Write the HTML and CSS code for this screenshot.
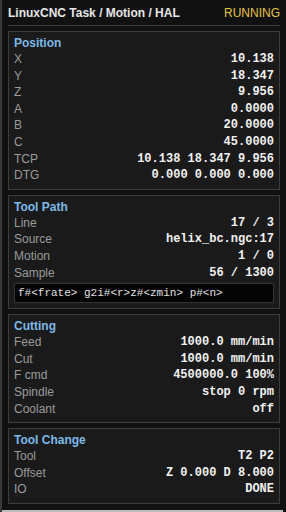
FILE: index.html
```html
<!DOCTYPE html>
<html>
<head>
<meta charset="utf-8">
<link rel="stylesheet" href="styles.css">
</head>
<body>
<div class="app">
  <div class="header">
    <span class="htitle">LinuxCNC Task / Motion / HAL</span>
    <span class="status">RUNNING</span>
  </div>

  <section class="panel">
    <div class="ptitle">Position</div>
    <div class="row"><span class="lbl">X</span><span class="val">10.138</span></div>
    <div class="row"><span class="lbl">Y</span><span class="val">18.347</span></div>
    <div class="row"><span class="lbl">Z</span><span class="val">9.956</span></div>
    <div class="row"><span class="lbl">A</span><span class="val">0.0000</span></div>
    <div class="row"><span class="lbl">B</span><span class="val">20.0000</span></div>
    <div class="row"><span class="lbl">C</span><span class="val">45.0000</span></div>
    <div class="row"><span class="lbl">TCP</span><span class="val">10.138 18.347 9.956</span></div>
    <div class="row"><span class="lbl">DTG</span><span class="val">0.000 0.000 0.000</span></div>
  </section>

  <section class="panel">
    <div class="ptitle">Tool Path</div>
    <div class="row"><span class="lbl">Line</span><span class="val">17 / 3</span></div>
    <div class="row"><span class="lbl">Source</span><span class="val">helix_bc.ngc:17</span></div>
    <div class="row"><span class="lbl">Motion</span><span class="val">1 / 0</span></div>
    <div class="row"><span class="lbl">Sample</span><span class="val">56 / 1300</span></div>
    <div class="code">f#&lt;frate&gt; g2i#&lt;r&gt;z#&lt;zmin&gt; p#&lt;n&gt;</div>
  </section>

  <section class="panel">
    <div class="ptitle">Cutting</div>
    <div class="row"><span class="lbl">Feed</span><span class="val">1000.0 mm/min</span></div>
    <div class="row"><span class="lbl">Cut</span><span class="val">1000.0 mm/min</span></div>
    <div class="row"><span class="lbl">F cmd</span><span class="val">4500000.0 100%</span></div>
    <div class="row"><span class="lbl">Spindle</span><span class="val">stop 0 rpm</span></div>
    <div class="row"><span class="lbl">Coolant</span><span class="val">off</span></div>
  </section>

  <section class="panel">
    <div class="ptitle">Tool Change</div>
    <div class="row"><span class="lbl">Tool</span><span class="val">T2 P2</span></div>
    <div class="row"><span class="lbl">Offset</span><span class="val">Z 0.000 D 8.000</span></div>
    <div class="row"><span class="lbl">IO</span><span class="val">DONE</span></div>
  </section>
</div>
<div class="frame-bottom"></div>
</body>
</html>
```
FILE: styles.css
```css
html, body {
  margin: 0;
  padding: 0;
  background: #111111;
  height: 512px;
  overflow: hidden;
}
body {
  font-family: "Liberation Sans", Arial, sans-serif;
  font-size: 12px;
  color: #e8e8e8;
}
.app {
  border-left: 2px solid #3a3a3a;
  padding: 0 6px;
  min-height: 512px;
  box-sizing: border-box;
}
.header {
  display: flex;
  justify-content: space-between;
  align-items: center;
  line-height: 16px;
  padding: 5px 0 4px 0;
  border-bottom: 1px solid #3c3c3c;
  margin-bottom: 5px;
}
.htitle {
  font-weight: bold;
  font-size: 12px;
  color: #e6e6e6;
}
.status {
  color: #e6c34a;
  font-size: 12px;
}
.panel {
  background: #1a1a1a;
  border: 1px solid #3d3d3d;
  padding: 4px 5px 5px 5px;
  margin-bottom: 5px;
}
.ptitle {
  font-weight: bold;
  color: #7db9e8;
  line-height: 15px;
}
.row {
  display: flex;
  justify-content: space-between;
  align-items: center;
  height: 16.6px;
  line-height: 16.6px;
}
.lbl {
  color: #9a9a9a;
}
.val {
  font-family: "Liberation Mono", "Courier New", monospace;
  font-weight: bold;
  color: #f2f2f2;
  white-space: pre;
}
.code {
  margin-top: 2px;
  background: #050505;
  border: 1px solid #333333;
  height: 18px;
  line-height: 18px;
  padding: 0 3px;
  font-family: "Liberation Mono", "Courier New", monospace;
  font-size: 11px;
  color: #e0e0e0;
  white-space: pre;
  overflow: hidden;
}
.frame-bottom {
  position: fixed;
  left: 2px;
  right: 3px;
  bottom: 0;
  height: 2px;
  background: #bdbdbd;
}
```
